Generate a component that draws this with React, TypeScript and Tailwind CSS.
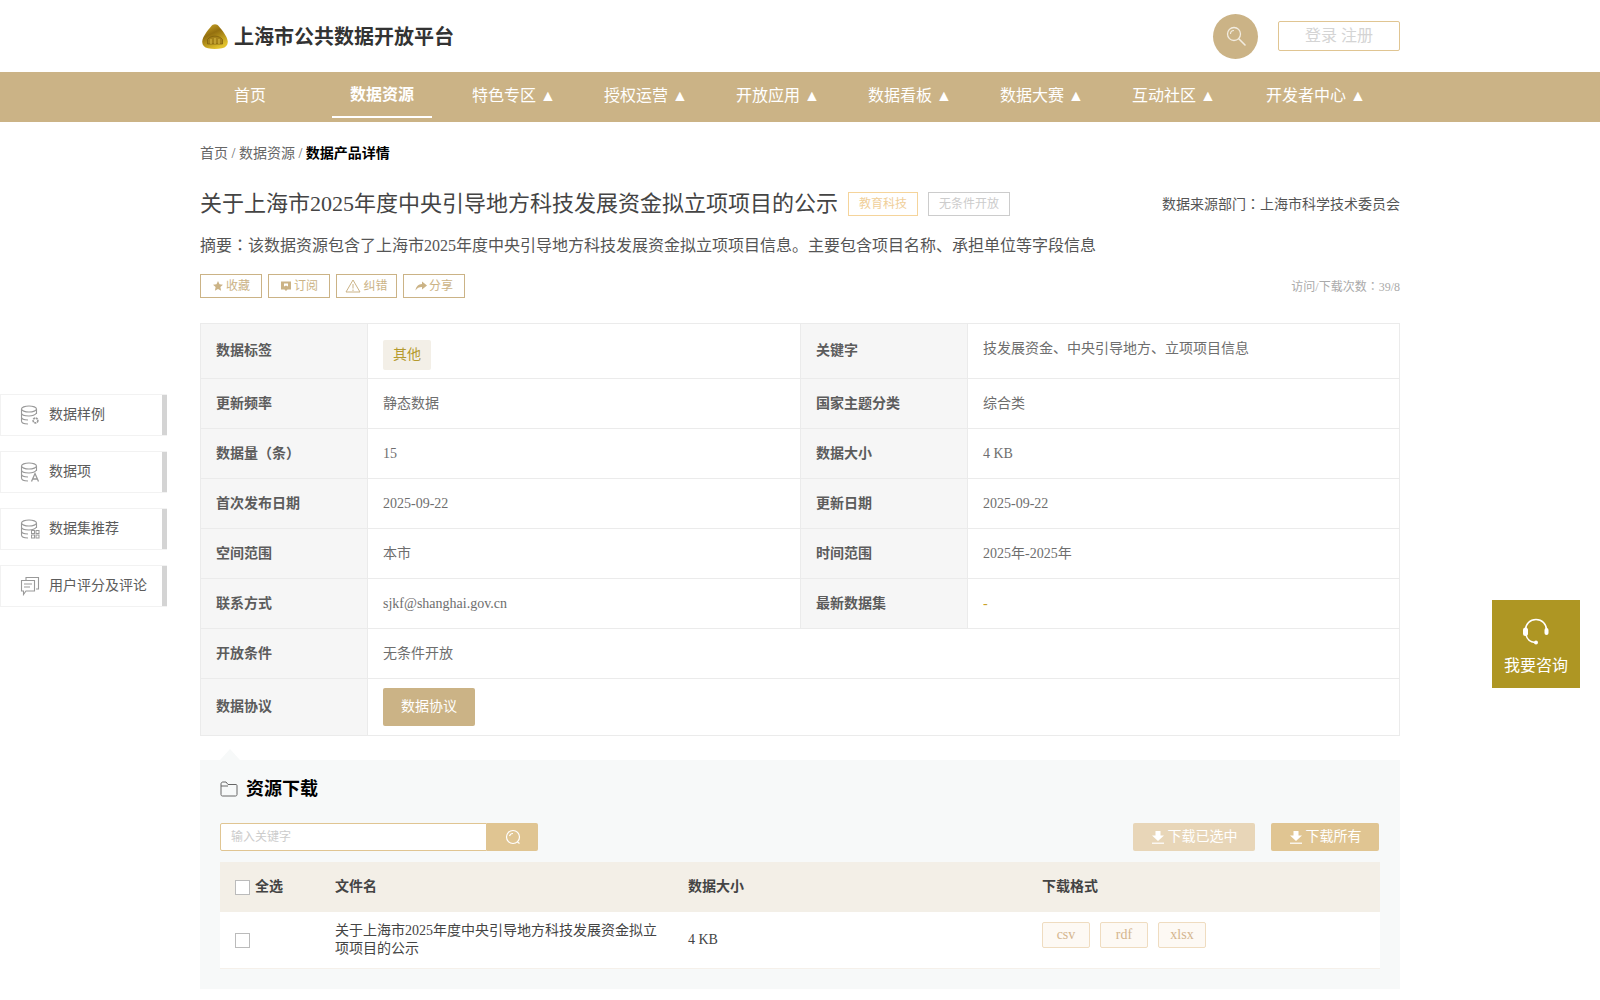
const FONT = "font-['Liberation_Serif','Noto_Sans_CJK_SC',serif]";

const NAV = ['特色专区', '授权运营', '开放应用', '数据看板', '数据大赛', '互动社区'];

function LogoMark() {
  return (
    <svg viewBox="0 0 26 25" className="ml-[2px] h-[25px] w-[26px] shrink-0">
      <defs>
        <linearGradient id="logoGold" x1="0" y1="0" x2="0.5" y2="1">
          <stop offset="0" stopColor="#d4ad2a" />
          <stop offset="0.45" stopColor="#94700f" />
          <stop offset="1" stopColor="#e0c02c" />
        </linearGradient>
      </defs>
      <path d="M9 2.5C11 -.5 15 -.5 17 2.5C20 6 25 12 25.7 17C26.2 21 24 23.5 20 24.3C15 25.2 10 25.2 6 24.3C2 23.5 -.2 21 .3 17C1 12 6 6 9 2.5Z" fill="url(#logoGold)" />
      <path d="M5.5 15.5C9 11 17 11 20.5 15.5V20H5.5Z" fill="#a5821a" stroke="#7a5c0c" strokeWidth="0.7" />
      <path d="M9 15V20M13 14V20M17 15V20" stroke="#d9bb45" strokeWidth="1.1" />
    </svg>
  );
}

function SearchGlyph({ className }: { className?: string }) {
  return (
    <svg viewBox="0 0 20 20" fill="none" stroke="currentColor" className={className}>
      <circle cx="8" cy="8" r="6.5" strokeWidth="1.3" />
      <path d="M4.5 8A3.5 3.5 0 0 1 8 4.5" strokeWidth="1.1" />
      <path d="M12.8 12.8L19 19" strokeWidth="1.6" strokeLinecap="round" />
    </svg>
  );
}

function DbIcon({ kind }: { kind: 'gear' | 'a' | 'grid' | 'chat' }) {
  if (kind === 'chat') {
    return (
      <svg viewBox="0 0 20 20" fill="none" stroke="#999" strokeWidth="1.1" className="h-5 w-5 shrink-0">
        <path d="M6 4V1.5H18.5V13H16" />
        <path d="M1.5 4.5H14.5V15H6L3.5 18.5V15H1.5Z" />
        <path d="M4 8H12M4 11H10" />
      </svg>
    );
  }
  return (
    <svg viewBox="0 0 20 20" fill="none" stroke="#999" strokeWidth="1.1" className="h-5 w-5 shrink-0">
      <ellipse cx="9" cy="4" rx="7.5" ry="3" />
      <path d="M1.5 4V16C1.5 18 4 19 8 19M16.5 4V9M1.5 8C1.5 10 5 11 9 11C12 11 15 10 16.5 8M1.5 12C1.5 14 4 15 8 15" />
      {kind === 'gear' && <circle cx="15.5" cy="15.5" r="2.4" strokeWidth="1.6" strokeDasharray="2 0.6" />}
      {kind === 'a' && <path d="M11.5 19.5L15 11.5L18.5 19.5M12.8 17H17.2" strokeWidth="1.3" />}
      {kind === 'grid' && (
        <g strokeWidth="1">
          <rect x="11.5" y="11.5" width="3" height="3" />
          <rect x="16" y="11.5" width="3" height="3" />
          <rect x="11.5" y="16" width="3" height="3" />
          <rect x="16" y="16" width="3" height="3" />
        </g>
      )}
    </svg>
  );
}

function SideItem({ label, kind }: { label: string; kind: 'gear' | 'a' | 'grid' | 'chat' }) {
  return (
    <div className="flex h-[42px] w-[167px] items-center border border-[#f2f2f2] border-r-0 bg-white">
      <div className="ml-[19px] flex flex-1 items-center gap-[9px] text-sm text-[#5c5c5c]">
        <DbIcon kind={kind} />
        <span>{label}</span>
      </div>
      <div className="h-full w-[5px] bg-[#d4d4d4]" />
    </div>
  );
}

function ActionBtn({ children, label, narrow }: { children: React.ReactNode; label: string; narrow?: boolean }) {
  return (
    <div className={`flex h-6 items-center justify-center gap-[2px] border border-[#cbb386] text-xs text-[#cbb386] ${narrow ? 'w-[61px]' : 'w-[62px]'}`}>
      {children}
      <span>{label}</span>
    </div>
  );
}

function Colon() {
  return <span className="font-['Noto_Sans_CJK_TC']">：</span>;
}

function Label({ children }: { children: React.ReactNode }) {
  return <td className="w-[167px] border border-[#ebebeb] bg-[#f6f6f6] pl-[15px] align-middle text-sm font-bold text-[#5c5c5c]">{children}</td>;
}

function Value({ children, span }: { children: React.ReactNode; span?: number }) {
  return <td colSpan={span} className="border border-[#ebebeb] pl-[15px] align-middle text-sm text-[#6e6e6e]">{children}</td>;
}

function DownloadGlyph() {
  return (
    <svg viewBox="0 0 14 14" fill="white" className="h-[14px] w-[14px]">
      <path d="M4.5 1H9.5V5.5H13L7 11L1 5.5H4.5Z" />
      <rect x="1" y="12.6" width="12" height="1.2" />
    </svg>
  );
}

function Checkbox() {
  return <div className="h-[15px] w-[15px] border border-[#bbb] bg-white" />;
}

export default function App() {
  return (
    <div className={`relative h-[1000px] overflow-hidden bg-white [text-spacing-trim:space-all] ${FONT}`}>
      {/* Header */}
      <div className="mx-auto flex h-[72px] w-[1200px] items-center">
        <LogoMark />
        <div className="ml-[6px] mt-[2px] text-xl font-bold text-[#333]">上海市公共数据开放平台</div>
        <div className="ml-auto flex h-[45px] w-[45px] items-center justify-center rounded-full bg-[#cbb386]">
          <SearchGlyph className="h-5 w-5 text-[#f2ece0]" />
        </div>
        <div className="ml-5 flex h-[30px] w-[122px] items-center justify-center rounded-[2px] border border-[#e0c592] text-base text-[#d4d4d4]">登录 注册</div>
      </div>

      {/* Nav */}
      <div className="h-[50px] bg-[#cbb386]">
        <div className="mx-auto flex h-full w-[1200px] gap-8 text-base text-white">
          <div className="flex h-full w-[100px] items-center justify-center pb-[2px]">首页</div>
          <div className="flex h-[46px] w-[100px] items-center justify-center border-b-2 border-white pt-[2px] font-bold">数据资源</div>
          {NAV.map((n) => (
            <div key={n} className="flex h-full w-[100px] items-center justify-center whitespace-nowrap pb-[2px]">{n} ▲</div>
          ))}
          <div className="flex h-full w-[120px] items-center justify-center whitespace-nowrap pb-[2px]">开发者中心 ▲</div>
        </div>
      </div>

      <div className="mx-auto w-[1200px]">
        {/* Breadcrumb */}
        <div className="mt-[23px] text-sm leading-[18px] text-[#666]">
          首页 / 数据资源 / <span className="font-bold text-black">数据产品详情</span>
        </div>

        {/* Title */}
        <div className="mt-[24px] flex h-[34px] items-center">
          <h1 className="mb-[2px] text-[22px] text-[#444]">关于上海市2025年度中央引导地方科技发展资金拟立项项目的公示</h1>
          <span className="ml-[10px] flex h-6 w-[70px] items-center justify-center border border-[#f5d49b] text-xs text-[#f0cf9a]">教育科技</span>
          <span className="ml-[10px] flex h-6 w-[82px] items-center justify-center border border-[#ccc] text-xs text-[#ccc]">无条件开放</span>
          <span className="ml-auto text-sm text-[#555]">数据来源部门<Colon />上海市科学技术委员会</span>
        </div>

        <p className="mt-[11px] text-base leading-[24px] text-[#555]">摘要<Colon />该数据资源包含了上海市2025年度中央引导地方科技发展资金拟立项项目信息。主要包含项目名称、承担单位等字段信息</p>

        {/* Actions */}
        <div className="mt-[16px] flex items-center gap-[6px]">
          <ActionBtn label="收藏">
            <svg viewBox="0 0 24 24" fill="#cbb386" className="h-3 w-3"><path d="M12 2l3 6.6 7 .8-5.2 4.8 1.4 7.1L12 17.8 5.8 21.3l1.4-7.1L2 9.4l7-.8z" /></svg>
          </ActionBtn>
          <ActionBtn label="订阅">
            <svg viewBox="0 0 12 12" fill="#cbb386" className="h-3 w-3"><path d="M1 1.5H11V9.5H7.5L6 11L4.5 9.5H1ZM4 3.5V6.5L6 5.5L8 6.5V3.5Z" fillRule="evenodd" /></svg>
          </ActionBtn>
          <ActionBtn label="纠错" narrow>
            <svg viewBox="0 0 16 14" fill="none" stroke="#cbb386" className="h-[14px] w-4"><path d="M8 1L15 13H1Z" /><path d="M8 5V9.5M8 10.5V12" /></svg>
          </ActionBtn>
          <ActionBtn label="分享">
            <svg viewBox="0 0 12 12" fill="#cbb386" className="h-3 w-3"><path d="M7 1.5L12 5.5L7 9.5V7C4 7 2 8 .5 10.5C1 6.5 3.5 4.2 7 4Z" /></svg>
          </ActionBtn>
          <span className="ml-auto text-xs text-[#aaa]">访问/下载次数<Colon />39/8</span>
        </div>

        {/* Detail table */}
        <table className="mt-[25px] w-[1199px] table-fixed border-collapse">
          <colgroup>
            <col className="w-[167px]" />
            <col className="w-[433px]" />
            <col className="w-[167px]" />
            <col className="w-[432px]" />
          </colgroup>
          <tbody>
            <tr className="h-[55px]">
              <Label>数据标签</Label>
              <Value><span className="mt-[7px] inline-block rounded-[2px] bg-[#f3efe7] px-[10px] py-[6px] leading-[18px] text-[#b59a2e]">其他</span></Value>
              <Label>关键字</Label>
              <td className="border border-[#ebebeb] pb-[4px] pl-[15px] align-middle text-sm text-[#6e6e6e]">技发展资金、中央引导地方、立项项目信息</td>
            </tr>
            <tr className="h-[50px]"><Label>更新频率</Label><Value>静态数据</Value><Label>国家主题分类</Label><Value>综合类</Value></tr>
            <tr className="h-[50px]"><Label>数据量（条）</Label><Value>15</Value><Label>数据大小</Label><Value>4 KB</Value></tr>
            <tr className="h-[50px]"><Label>首次发布日期</Label><Value>2025-09-22</Value><Label>更新日期</Label><Value>2025-09-22</Value></tr>
            <tr className="h-[50px]"><Label>空间范围</Label><Value>本市</Value><Label>时间范围</Label><Value>2025年-2025年</Value></tr>
            <tr className="h-[50px]"><Label>联系方式</Label><Value>sjkf@shanghai.gov.cn</Value><Label>最新数据集</Label><Value><span className="text-[#c9a227]">-</span></Value></tr>
            <tr className="h-[50px]"><Label>开放条件</Label><Value span={3}>无条件开放</Value></tr>
            <tr className="h-[57px]">
              <Label>数据协议</Label>
              <Value span={3}><span className="flex h-[38px] w-[92px] items-center justify-center rounded-[2px] bg-[#cbb386] text-sm text-white">数据协议</span></Value>
            </tr>
          </tbody>
        </table>

        {/* Resource download */}
        <div className="relative mt-[24px] bg-[#f7f9f9] px-5 pb-5 pt-[17px]">
          <div className="absolute left-[20px] top-[-11px] h-0 w-0 border-x-[10px] border-b-[11px] border-x-transparent border-b-[#f7f9f9]" />
          <div className="flex h-[24px] items-center gap-2">
            <svg viewBox="0 0 18 16" fill="none" stroke="#666" className="h-4 w-[18px]">
              <path d="M1 3C1 1.8 1.8 1 3 1H6L8 3.5H16C16.6 3.5 17 4 17 4.5V13.5C17 14.4 16.4 15 15.5 15H2.5C1.6 15 1 14.4 1 13.5Z" />
              <path d="M1 5H8" />
            </svg>
            <h2 className="text-lg font-bold text-black">资源下载</h2>
          </div>

          <div className="mt-[22px] flex items-center">
            <div className="flex h-7 w-[267px] items-center rounded-l-[2px] border border-[#e0c592] bg-white pl-[10px] text-xs text-[#ccc]">输入关键字</div>
            <div className="flex h-7 w-[51px] items-center justify-center rounded-r-[2px] bg-[#e0c592]">
              <svg viewBox="0 0 16 16" fill="none" stroke="white" strokeWidth="1.2" className="h-4 w-4">
                <circle cx="8" cy="8" r="6.5" />
                <path d="M4.5 7A3.5 3.5 0 0 1 8 4.5M12.5 13L14.5 14.5" />
              </svg>
            </div>
            <div className="ml-auto flex h-7 w-[122px] items-center justify-center gap-[3px] rounded-[2px] bg-[#e8d6b8] text-sm text-white"><DownloadGlyph />下载已选中</div>
            <div className="ml-4 mr-[1px] flex h-7 w-[108px] items-center justify-center gap-[3px] rounded-[2px] bg-[#e0c592] text-sm text-white"><DownloadGlyph />下载所有</div>
          </div>

          <div className="mt-[11px] bg-white">
            <div className="flex h-[50px] items-center bg-[#f3efe7] text-sm font-bold text-[#444]">
              <div className="flex w-[115px] items-center gap-[5px] pl-[15px]"><Checkbox />全选</div>
              <div className="w-[353px]">文件名</div>
              <div className="w-[354px]">数据大小</div>
              <div>下载格式</div>
            </div>
            <div className="flex h-[57px] items-center border-b border-[#f5f0ea] text-sm text-[#444]">
              <div className="w-[115px] pl-[15px]"><Checkbox /></div>
              <div className="w-[353px] pr-[25px] leading-[18px]">关于上海市2025年度中央引导地方科技发展资金拟立项项目的公示</div>
              <div className="w-[354px]">4 KB</div>
              <div className="mb-[10px] flex gap-[10px]">
                {['csv', 'rdf', 'xlsx'].map((f) => (
                  <span key={f} className="flex h-[26px] w-12 items-center justify-center rounded-[2px] border border-[#efdcc0] bg-[#fdf9f4] text-sm text-[#d4b58e]">{f}</span>
                ))}
              </div>
            </div>
          </div>
        </div>
      </div>

      {/* Floating side nav */}
      <div className="absolute left-0 top-[394px] flex flex-col gap-[15px]">
        <SideItem label="数据样例" kind="gear" />
        <SideItem label="数据项" kind="a" />
        <SideItem label="数据集推荐" kind="grid" />
        <SideItem label="用户评分及评论" kind="chat" />
      </div>

      {/* Consult */}
      <div className="absolute left-[1492px] top-[600px] flex h-[88px] w-[88px] flex-col items-center bg-[#ae9623] pt-[17px] text-white">
        <svg viewBox="0 0 28 28" fill="none" className="h-[28px] w-[28px]">
          <path d="M3.5 13C3.5 7 8 2.5 14 2.5S24.5 7 24.5 13" stroke="white" strokeWidth="1.6" />
          <path d="M4 18C5 22 8 25 13 25.5" stroke="white" strokeWidth="1.4" />
          <rect x="1" y="10.5" width="5" height="8.5" rx="2.5" fill="white" />
          <rect x="22.5" y="11" width="4" height="7" rx="2" fill="white" />
          <circle cx="14" cy="25.5" r="2" fill="white" />
        </svg>
        <div className="mt-[10px] text-base leading-[22px]">我要咨询</div>
      </div>
    </div>
  );
}
